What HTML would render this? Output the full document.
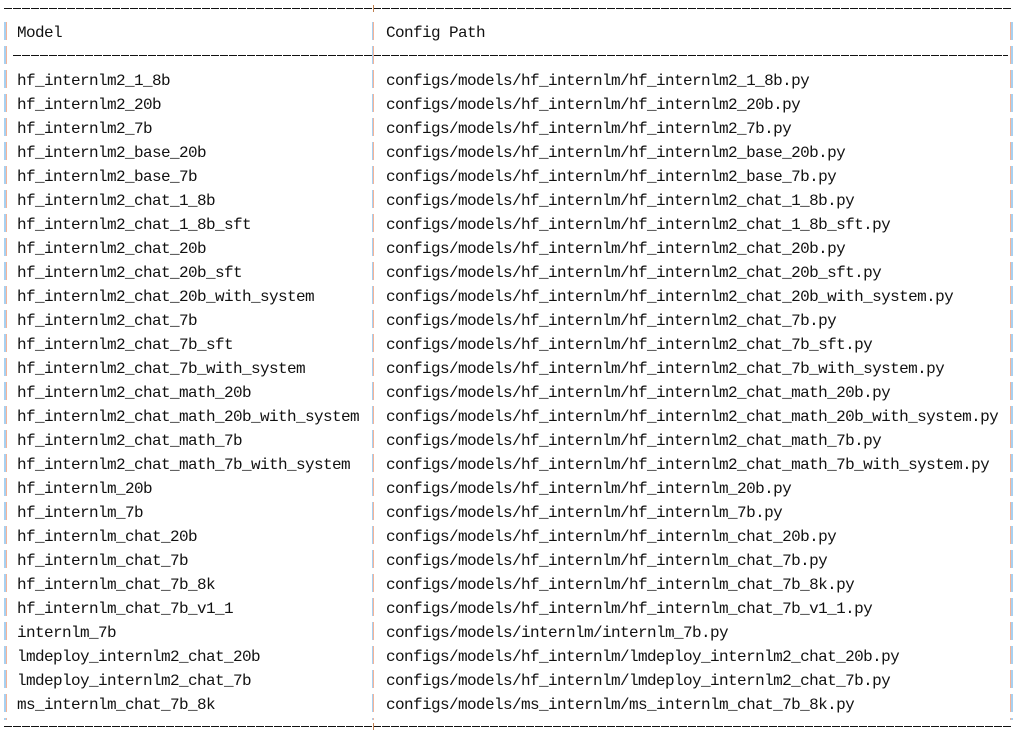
<!DOCTYPE html>
<html><head><meta charset="utf-8"><style>
html,body{margin:0;padding:0;background:#fff;width:1016px;height:732px;overflow:hidden}
body{position:relative;font-family:"Liberation Mono","Noto Sans CJK SC",monospace;font-size:16px;letter-spacing:-0.6px;color:#111}
.hl{position:absolute;height:1px;background:repeating-linear-gradient(90deg,#111 0 8px,transparent 8px 9px)}
.bar{position:absolute;width:2px;background:repeating-linear-gradient(180deg,transparent 0 2px,#a8d0f0 2px 20px,transparent 20px 24px)}
.bar.o{background:repeating-linear-gradient(180deg,transparent 0 2px,#f2b49a 2px 20px,transparent 20px 24px);width:1px}
.plus{position:absolute;width:1px;height:7px;background:#c08050}
.row{position:absolute;height:24px;line-height:24px;white-space:pre}
</style></head><body>
<div class="hl" style="left:4px;top:8px;width:1008px"></div>
<div class="hl" style="left:13px;top:55px;width:995px"></div>
<div class="hl" style="left:4px;top:726px;width:1008px"></div>
<div class="plus" style="left:373px;top:5px"></div>
<div class="plus" style="left:373px;top:52px"></div>
<div class="plus" style="left:373px;top:723px"></div>
<div class="bar" style="left:4px;top:20px;height:700px"></div>
<div class="bar o" style="left:6px;top:20px;height:700px"></div>
<div class="bar" style="left:372px;top:20px;height:700px;width:1px"></div>
<div class="bar o" style="left:373px;top:20px;height:700px"></div>
<div class="bar o" style="left:1010px;top:20px;height:700px"></div>
<div class="bar" style="left:1011px;top:20px;height:700px"></div>
<div id="t"></div>
<script>
var m=["hf_internlm2_1_8b","hf_internlm2_20b","hf_internlm2_7b","hf_internlm2_base_20b","hf_internlm2_base_7b","hf_internlm2_chat_1_8b","hf_internlm2_chat_1_8b_sft","hf_internlm2_chat_20b","hf_internlm2_chat_20b_sft","hf_internlm2_chat_20b_with_system","hf_internlm2_chat_7b","hf_internlm2_chat_7b_sft","hf_internlm2_chat_7b_with_system","hf_internlm2_chat_math_20b","hf_internlm2_chat_math_20b_with_system","hf_internlm2_chat_math_7b","hf_internlm2_chat_math_7b_with_system","hf_internlm_20b","hf_internlm_7b","hf_internlm_chat_20b","hf_internlm_chat_7b","hf_internlm_chat_7b_8k","hf_internlm_chat_7b_v1_1","internlm_7b","lmdeploy_internlm2_chat_20b","lmdeploy_internlm2_chat_7b","ms_internlm_chat_7b_8k"];
var h='<div class="row" style="left:17px;top:21px">Model</div><div class="row" style="left:386px;top:21px">Config Path</div>';
m.forEach(function(n,i){var p;
if(n=="internlm_7b")p="configs/models/internlm/internlm_7b.py";
else if(n.indexOf("ms_")==0)p="configs/models/ms_internlm/"+n+".py";
else p="configs/models/hf_internlm/"+n+".py";
var y=69+i*24;
h+='<div class="row" style="left:17px;top:'+y+'px">'+n+'</div><div class="row" style="left:386px;top:'+y+'px">'+p+'</div>';});
document.getElementById('t').innerHTML=h;
</script>
</body></html>
